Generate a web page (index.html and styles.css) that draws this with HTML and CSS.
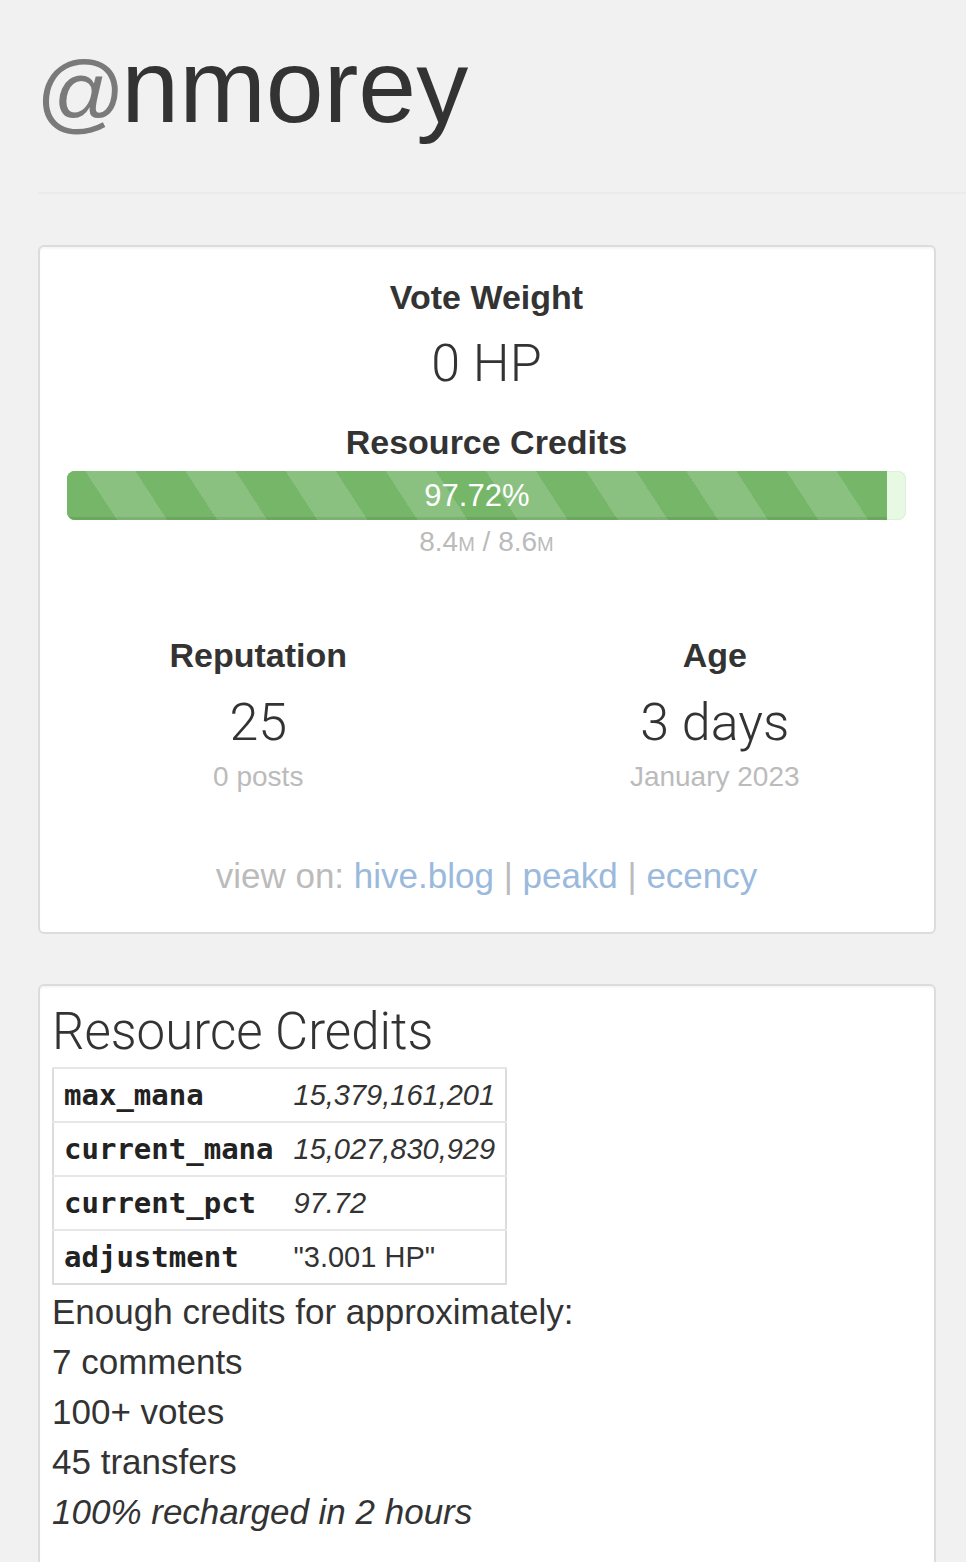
FILE: index.html
```html
<!DOCTYPE html>
<html lang="en">
<head>
<meta charset="utf-8">
<title>@nmorey</title>
<link rel="stylesheet" href="styles.css">
</head>
<body>
<div class="page">
  <h1 class="user"><span class="at">@</span>nmorey</h1>
  <hr class="rule">

  <section class="card summary">
    <h3 class="label label-first">Vote Weight</h3>
    <div class="big">0 HP</div>
    <h3 class="label label-rc">Resource Credits</h3>
    <div class="progress">
      <div class="bar" style="width:97.72%"><span>97.72%</span></div>
    </div>
    <div class="sub sub-rc">8.4<small>M</small> / 8.6<small>M</small></div>

    <div class="stats">
      <div class="stat">
        <h3 class="label">Reputation</h3>
        <div class="big">25</div>
        <div class="sub">0 posts</div>
      </div>
      <div class="stat">
        <h3 class="label">Age</h3>
        <div class="big">3 days</div>
        <div class="sub">January 2023</div>
      </div>
    </div>

    <p class="view">view on: <a href="#">hive.blog</a> | <a href="#">peakd</a> | <a href="#">ecency</a></p>
  </section>

  <section class="card rc">
    <h2 class="rc-title">Resource Credits</h2>
    <table class="kv">
      <tr><th>max_mana</th><td class="num">15,379,161,201</td></tr>
      <tr><th>current_mana</th><td class="num">15,027,830,929</td></tr>
      <tr><th>current_pct</th><td class="num">97.72</td></tr>
      <tr><th>adjustment</th><td>"3.001 HP"</td></tr>
    </table>
    <p class="line">Enough credits for approximately:</p>
    <p class="line">7 comments</p>
    <p class="line">100+ votes</p>
    <p class="line">45 transfers</p>
    <p class="line recharge">100% recharged in 2 hours</p>
  </section>
</div>
</body>
</html>
```

FILE: styles.css
```css
html, body {
  margin: 0;
  padding: 0;
  background: #f1f1f1;
}

body {
  font-family: "Liberation Sans", Arial, sans-serif;
  color: #333;
  overflow: hidden;
}

.page {
  padding: 30px 30px 0 38px;
  min-height: 1562px;
  box-sizing: border-box;
}

.user {
  margin: 0 0 0 -2px;
  font-size: 104px;
  line-height: 112px;
  height: 112px;
  font-weight: 400;
  color: #333;
}

.user .at {
  color: #7a7a7a;
  font-size: 88px;
  line-height: 0;
  margin-right: -4px;
}

.rule {
  margin: 50px -30px 0 0;
  border: 0;
  border-top: 2px solid #ebebeb;
  height: 0;
}

.card {
  background: #fff;
  border: 2px solid #dcdcdc;
  border-radius: 6px;
  box-shadow: inset 0 2px 2px rgba(0, 0, 0, 0.04);
}

.summary {
  margin-top: 51px;
  padding: 0 28px 31px 27px;
  text-align: center;
}

.label {
  margin: 0;
  font-size: 34px;
  line-height: 40px;
  font-weight: 700;
  color: #333;
}

.label-first {
  margin-top: 30px;
}

.label-rc {
  margin-top: 28px;
}

.big {
  margin-top: 17px;
  font-family: Roboto, "Liberation Sans", sans-serif;
  font-weight: 300;
  font-size: 52px;
  line-height: 60px;
  color: #333;
}

.progress {
  margin-top: 9px;
  height: 49px;
  border-radius: 8px;
  background: #e7f9e2;
  box-shadow: inset 0 0 0 1px #dcf1d6;
  overflow: hidden;
  display: flex;
}

.bar {
  height: 100%;
  background-color: #76b668;
  background-image: repeating-linear-gradient(57deg,
      #76b668 0, #76b668 42px,
      #8ac180 42px, #8ac180 84px);
  box-shadow: inset 0 -3px 0 rgba(0, 0, 0, 0.08);
  display: flex;
  align-items: center;
  justify-content: center;
  color: #fff;
  font-size: 31px;
  line-height: 49px;
}

.sub {
  margin-top: 6px;
  font-size: 28px;
  line-height: 32px;
  color: #bbb;
}

.sub small {
  font-size: 20px;
}

.stats {
  margin: 75px -37px 0;
  display: grid;
  grid-template-columns: 1fr 1fr;
}

.stat .big {
  margin-top: 18px;
}

.stat .sub {
  margin-top: 8px;
}

.view {
  margin: 58px 0 0;
  font-size: 35px;
  line-height: 50px;
  color: #bbb;
}

.view a {
  color: #9ab9dc;
  text-decoration: none;
}

.rc {
  margin-top: 50px;
  padding: 16px 12px 40px;
}

.rc-title {
  margin: 0;
  font-family: Roboto, "Liberation Sans", sans-serif;
  font-weight: 300;
  font-size: 51px;
  line-height: 60px;
  color: #333;
}

.kv {
  margin: 5px 0 2px;
  border-collapse: collapse;
  border: 2px solid #dcdcdc;
}

.kv th,
.kv td {
  border-top: 2px solid #e6e6e6;
  padding: 10px 10px;
  height: 32px;
  line-height: 32px;
  text-align: left;
  vertical-align: middle;
  font-size: 29px;
  white-space: nowrap;
}

.kv th {
  font-family: "DejaVu Sans Mono", "Liberation Mono", monospace;
  font-weight: 700;
  color: #222;
}

.kv td {
  font-family: "Liberation Sans", Arial, sans-serif;
  color: #333;
}

.kv td.num {
  font-style: italic;
}

.line {
  margin: 0;
  font-size: 35px;
  line-height: 50px;
  color: #333;
}

.recharge {
  font-style: italic;
}
```
